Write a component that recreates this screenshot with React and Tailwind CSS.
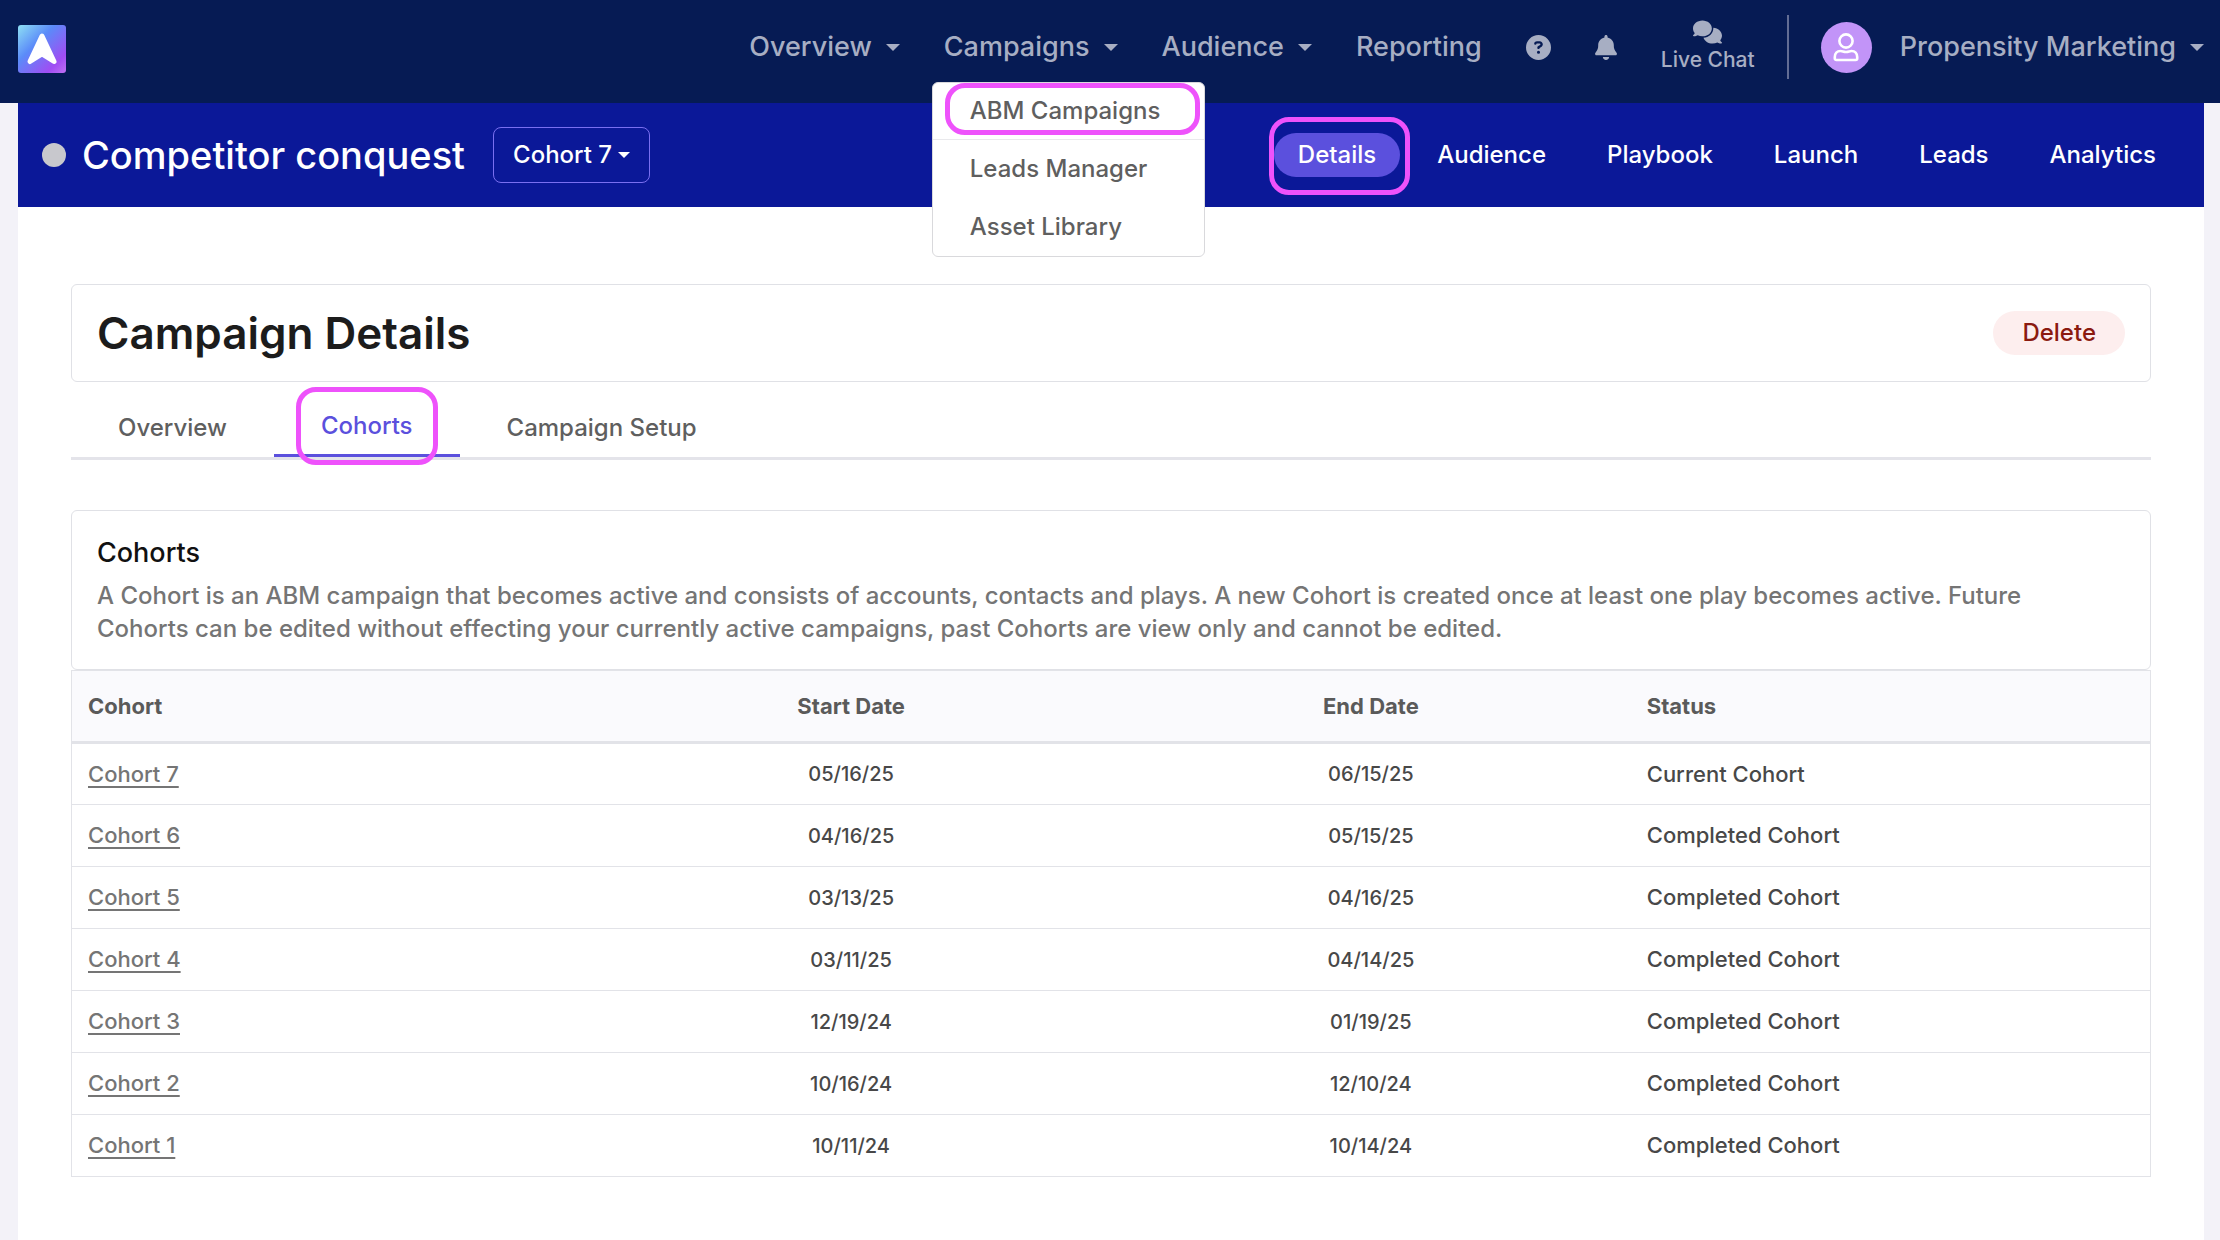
import React from "react";
import { FaBell, FaCircleQuestion, FaComments } from "react-icons/fa6";

const cohorts = [
  { name: "Cohort 7", start: "05/16/25", end: "06/15/25", status: "Current Cohort" },
  { name: "Cohort 6", start: "04/16/25", end: "05/15/25", status: "Completed Cohort" },
  { name: "Cohort 5", start: "03/13/25", end: "04/16/25", status: "Completed Cohort" },
  { name: "Cohort 4", start: "03/11/25", end: "04/14/25", status: "Completed Cohort" },
  { name: "Cohort 3", start: "12/19/24", end: "01/19/25", status: "Completed Cohort" },
  { name: "Cohort 2", start: "10/16/24", end: "12/10/24", status: "Completed Cohort" },
  { name: "Cohort 1", start: "10/11/24", end: "10/14/24", status: "Completed Cohort" },
];

const sections = ["Audience", "Playbook", "Launch", "Leads", "Analytics"];

function Caret({ className = "" }) {
  return (
    <svg
      viewBox="0 0 14 8"
      preserveAspectRatio="none"
      className={`shrink-0 ${className}`}
      fill="currentColor"
      aria-hidden="true"
    >
      <path d="M0 0h14L7 8z" />
    </svg>
  );
}

function NavMenuButton({ children }) {
  return (
    <button type="button" className="flex h-16 items-center gap-3.5 whitespace-nowrap">
      {children}
      <Caret className="h-[7px] w-3.5" />
    </button>
  );
}

function Highlight({ className }) {
  return (
    <span
      aria-hidden="true"
      className={`pointer-events-none absolute border-[5px] border-[#ee52fb] ${className}`}
    />
  );
}

function Logo() {
  return (
    <svg viewBox="0 0 48 48" className="size-12" aria-hidden="true">
      <defs>
        <linearGradient id="logo-fill" x1="0" y1="0" x2="1" y2="1">
          <stop offset="0" stopColor="#8ee0f4" />
          <stop offset="0.38" stopColor="#5b8bf9" />
          <stop offset="0.8" stopColor="#a04df3" />
          <stop offset="1" stopColor="#c070f2" />
        </linearGradient>
      </defs>
      <rect width="48" height="48" rx="3" fill="url(#logo-fill)" />
      <path
        d="M24 11L36 36.500L24 29L12 36.500Z"
        fill="#fff"
        stroke="#fff"
        strokeWidth="5"
        strokeLinejoin="round"
      />
    </svg>
  );
}

function Avatar() {
  return (
    <span className="flex size-[51px] shrink-0 items-center justify-center rounded-full bg-[#c294f8]">
      <svg
        viewBox="0 0 28 30"
        className="h-[30px] w-7"
        fill="none"
        stroke="#fff"
        strokeWidth="2.600"
        strokeLinejoin="round"
        aria-hidden="true"
      >
        <circle cx="14" cy="9" r="6.600" />
        <path d="M8.500 19c2 0 3 1 5.500 1s3.500-1 5.500-1c3.500 0 5.700 2.500 5.700 6v1.500c0 1-.7 1.500-1.500 1.500H4.300c-.8 0-1.500-.5-1.500-1.500V25c0-3.500 2.200-6 5.700-6z" />
      </svg>
    </span>
  );
}

function TopBar() {
  return (
    <header className="flex items-start justify-between bg-[#061b54] pt-[15px] pr-4 pb-6 pl-[18px] text-[27px] leading-9 text-[#a7aec3]">
      <a href="#home" aria-label="Home" className="mt-2.5">
        <Logo />
      </a>
      <nav aria-label="Main" className="flex h-16 items-center">
        <NavMenuButton>Overview</NavMenuButton>
        <div className="relative ml-11">
          <NavMenuButton>Campaigns</NavMenuButton>
          <div className="absolute top-[67px] -left-3 z-10 flex w-[273px] flex-col rounded-md border border-[#d9d9dc] bg-white text-2xl text-[#5f5f5f]">
            <a href="#abm-campaigns" className="flex h-[57px] items-center border-b border-[#e9e9ec] px-[37px] whitespace-nowrap">
              ABM Campaigns
            </a>
            <a href="#leads-manager" className="flex h-[58px] items-center px-[37px] whitespace-nowrap">
              Leads Manager
            </a>
            <a href="#asset-library" className="flex h-[58px] items-center px-[37px] whitespace-nowrap">
              Asset Library
            </a>
            <Highlight className="top-0 right-1 left-3 h-[52px] rounded-[20px]" />
          </div>
        </div>
        <div className="ml-11">
          <NavMenuButton>Audience</NavMenuButton>
        </div>
        <a href="#reporting" className="ml-11">Reporting</a>
        <button type="button" aria-label="Help" className="ml-11">
          <FaCircleQuestion className="size-[25px]" />
        </button>
        <button type="button" aria-label="Notifications" className="ml-11">
          <FaBell className="h-[25px] w-[22px]" />
        </button>
        <button type="button" className="ml-11 flex flex-col items-center text-[21px] leading-[30px] whitespace-nowrap">
          <FaComments className="h-[26px] w-[29px]" />
          Live Chat
        </button>
        <span className="ml-8 h-16 w-0.5 bg-[#626d94]" />
        <button type="button" className="ml-8 flex items-center whitespace-nowrap">
          <Avatar />
          <span className="ml-7">Propensity Marketing</span>
          <Caret className="ml-3.5 h-[7px] w-3.5" />
        </button>
      </nav>
    </header>
  );
}

function CampaignBar() {
  return (
    <div className="flex items-center justify-between bg-[#0b1898] py-6 px-6 text-2xl text-white">
      <div className="flex items-center">
        <span className="size-6 rounded-full bg-[#c8c8cd]" />
        <h1 className="ml-4 text-[38px] leading-[56px] font-medium">Competitor conquest</h1>
        <button type="button" className="ml-7 flex h-14 items-center gap-1.5 rounded-lg border border-[#7a6ff0] px-[19px]">
          Cohort 7
          <Caret className="h-1.5 w-3" />
        </button>
      </div>
      <nav aria-label="Campaign" className="flex items-center gap-[13px]">
        <a href="#details" aria-current="page" className="relative flex h-11 items-center rounded-full bg-[#5b50dd] px-6">
          Details
          <Highlight className="-top-4 -right-2.5 -left-[5px] h-[78px] rounded-[20px]" />
        </a>
        {sections.map((name) => (
          <a key={name} href={`#${name.toLowerCase()}`} className="px-6">
            {name}
          </a>
        ))}
      </nav>
    </div>
  );
}

function CohortTable() {
  return (
    <table className="w-full table-fixed border-collapse border border-[#e2e3e8] text-[22px] text-[#484848]">
      <thead>
        <tr className="h-[72px] border-b-[3px] border-[#e2e3e8] bg-[#fafafd] text-[#5a5a5a]">
          <th scope="col" className="px-4 text-left font-bold">Cohort</th>
          <th scope="col" className="px-4 text-center font-bold">Start Date</th>
          <th scope="col" className="px-4 text-center font-bold">End Date</th>
          <th scope="col" className="px-4 text-left font-bold">Status</th>
        </tr>
      </thead>
      <tbody>
        {cohorts.map((cohort) => (
          <tr key={cohort.name} className="h-[62px] border-b border-[#e2e3e8]">
            <td className="px-4">
              <a href={`#${cohort.name.replace(" ", "-").toLowerCase()}`} className="text-[#757575] underline decoration-2 underline-offset-4">
                {cohort.name}
              </a>
            </td>
            <td className="px-4 text-center text-xl">{cohort.start}</td>
            <td className="px-4 text-center text-xl">{cohort.end}</td>
            <td className="px-4">{cohort.status}</td>
          </tr>
        ))}
      </tbody>
    </table>
  );
}

export default function App() {
  return (
    <div className="flex min-h-screen flex-col bg-[#f3f2f8] font-['Inter',sans-serif] font-medium">
      <TopBar />
      <div className="mr-4 ml-[18px] flex grow flex-col bg-white">
        <CampaignBar />
        <main className="px-[53px] pt-[77px] pb-14">
          <section className="flex items-center justify-between rounded-md border border-[#e0e1e6] px-[25px] py-5">
            <h2 className="text-[44px] leading-[56px] font-semibold text-[#1c1c1c]">Campaign Details</h2>
            <button type="button" className="h-11 rounded-full bg-[#fdeeee] px-[29px] text-2xl text-[#8b1a10]">
              Delete
            </button>
          </section>

          <nav aria-label="Campaign details" className="flex border-b-[3px] border-[#e4e4ea] pt-4 text-2xl text-[#5f5f5f]">
            <a href="#overview" className="flex h-[59px] items-center px-[47px]">Overview</a>
            <a
              href="#cohorts"
              aria-current="page"
              className="relative flex h-[59px] items-center border-b-[3px] border-[#5b50dd] px-[47px] text-[#5b50dd]"
            >
              Cohorts
              <Highlight className="inset-x-[22px] -top-[11px] h-[78px] rounded-[20px]" />
            </a>
            <a href="#campaign-setup" className="flex h-[59px] items-center px-[47px]">Campaign Setup</a>
          </nav>

          <section className="mt-[50px]">
            <div className="rounded-md border border-[#e0e1e6] py-6 pr-20 pl-[25px]">
              <h3 className="mb-2 text-[27px] leading-9 text-[#111111]">Cohorts</h3>
              <p className="text-2xl leading-[33px] text-[#757575]">
                A Cohort is an ABM campaign that becomes active and consists of accounts, contacts and plays. A new
                Cohort is created once at least one play becomes active. Future Cohorts can be edited without effecting
                your currently active campaigns, past Cohorts are view only and cannot be edited.
              </p>
            </div>
            <CohortTable />
          </section>
        </main>
      </div>
    </div>
  );
}
